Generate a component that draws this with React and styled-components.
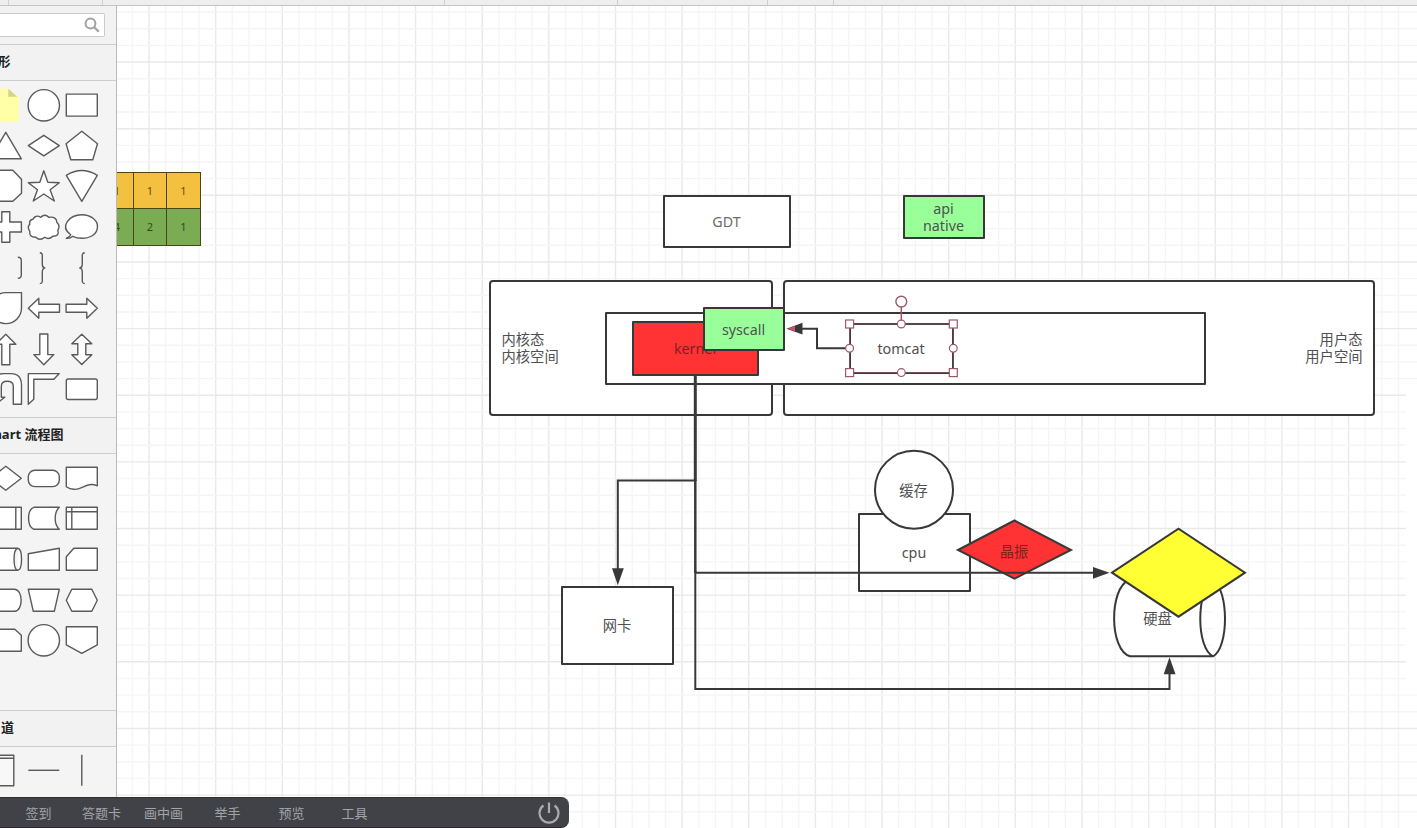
import React from "react";
import styled, { createGlobalStyle, css } from "styled-components";

const sans = `"Noto Sans", "Noto Sans CJK SC", sans-serif`;
const INK = "#383838";

const Global = createGlobalStyle`
  * { box-sizing: border-box; }
  body { margin: 0; overflow: hidden; background: #fff; font-family: ${sans}; }
`;

const Page = styled.div`
  position: relative;
  display: flex;
  flex-direction: column;
  width: 1417px;
  height: 828px;
  overflow: hidden;
`;

const Toolbar = styled.header`
  display: flex;
  flex: none;
  height: 6px;
  background: #eeeeee;
  border-bottom: 1px solid #c4c4c4;
`;
const ToolGroup = styled.div`
  width: ${(p) => p.$w}px;
  border-right: 1px solid #cfcfcf;
`;

const Main = styled.main`
  display: flex;
  flex: 1;
  min-height: 0;
`;

const Sidebar = styled.aside`
  position: relative;
  z-index: 2;
  flex: none;
  width: 117px;
  overflow: hidden;
  background: #f4f4f4;
  border-right: 1px solid #b9b9b9;
`;
const SearchRow = styled.div`
  height: 38px;
  padding: 7px 11px 0 0;
  background: #f2f2f2;
`;
const SearchBox = styled.div`
  display: flex;
  align-items: center;
  justify-content: flex-end;
  height: 24px;
  padding-right: 4px;
  background: #fff;
  border: 1px solid #cbcbcb;
  border-left: 0;
  border-radius: 0 2px 2px 0;
`;
const Heading = styled.h3`
  display: flex;
  align-items: center;
  justify-content: flex-end;
  height: 37px;
  margin: 0;
  padding: 0 ${(p) => p.$right}px 3px 0;
  background: #f2f2f2;
  border: solid #cdcdcd;
  border-width: 1px 0;
  color: #222;
  font: bold 13px/18px ${sans};
  white-space: nowrap;
`;
const Palette = styled.div`
  display: grid;
  grid-template-columns: repeat(3, 37.6px);
  grid-auto-rows: 40.65px;
  align-content: start;
  height: ${(p) => p.$h}px;
  margin-left: -12.6px;
  padding-top: ${(p) => p.$top}px;
`;
const Glyph = styled.svg`
  width: 37.6px;
  height: 40.65px;
  overflow: visible;
  fill: #fff;
  stroke: #5a5a5a;
  stroke-width: 1.4;
  stroke-linejoin: round;
`;

const Canvas = styled.section`
  position: relative;
  flex: 1;
  overflow: hidden;
  background: #fff;
`;
/* Board coordinates start at the top left corner of the window. */
const Board = styled.div`
  position: absolute;
  left: -117px;
  top: -6px;
  width: 1417px;
  height: 828px;
`;
const Layer = styled.svg`
  position: absolute;
  left: 0;
  top: 0;
  width: 1417px;
  height: 828px;
  fill: none;
  stroke: ${INK};
  stroke-width: 2;
`;
const Node = styled.div`
  position: absolute;
  left: ${(p) => p.$x}px;
  top: ${(p) => p.$y}px;
  width: ${(p) => p.$w}px;
  height: ${(p) => p.$h}px;
  display: flex;
  align-items: center;
  justify-content: ${(p) => p.$align || "center"};
  padding: ${(p) => p.$pad || "0 1px 0 0"};
  text-align: ${(p) => p.$text || "center"};
  white-space: pre;
  color: ${(p) => p.$color || "#505050"};
  font: 14.3px/17px ${sans};
  ${(p) =>
    !p.$bare &&
    css`
      background: ${p.$fill || "#fff"};
      border: 2px solid ${INK};
      border-radius: ${p.$r || 1}px;
    `}
`;

const Table = styled.div`
  position: absolute;
  left: 100px;
  top: 172px;
  display: grid;
  grid-template-columns: 33px 33px 33px;
  grid-auto-rows: 36px;
  border: 1px solid #4a4416;
`;
const Cell = styled.div`
  display: flex;
  align-items: center;
  justify-content: center;
  background: ${(p) => p.$bg};
  border: solid #4a4416;
  border-width: 0 1px 1px 0;
  &:nth-child(3n) { border-right: 0; }
  &:nth-child(n + 4) { border-bottom: 0; }
  color: ${(p) => p.$color};
  font: 11px/14px ${sans};
`;

const Dock = styled.nav`
  position: absolute;
  z-index: 3;
  left: 0;
  bottom: 0;
  display: flex;
  align-items: center;
  width: 568.5px;
  height: 31.5px;
  padding: 2px 9px 0 25.4px;
  background: #404248;
  border-top: 1px solid #2f3034;
  border-bottom: 1px solid #2b262b;
  border-radius: 0 8px 8px 0;
`;
const DockItem = styled.span`
  width: ${(p) => p.$w}px;
  color: #a3a4a6;
  font: 13px/18px "Noto Sans CJK SC", sans-serif;
`;
const PowerIcon = styled.svg`
  width: 22px;
  height: 22px;
  margin-left: auto;
  fill: none;
  stroke: #a9abad;
  stroke-width: 2.2;
`;

const basicShapes = [
  <g stroke="none"><path fill="#ffffa8" d="M-16-16.5H2.5L13-8V16.5H-16z" /><path fill="#d2d28e" d="M2.5-16.5 11.5-8.5h-9z" /></g>,
  <circle r="15.7" />,
  <path d="M-15.5-11.2h31v22h-31z" />,
  <path d="M0-14 15.6 12.5h-31.2z" />,
  <path d="M-15.5-.7 0-11 15.5-.7 0 9.6z" />,
  <path d="M0-15 15.7-2.5 11 13.5H-11L-15.7-2.5z" />,
  <path d="M-7-16H7L15.7-7V7L7 15H-7L-15.7 7V-7z" />,
  <path d="M0-15.5 4-4 15.5-3.5 6.3 3.5 10.5 14.7 0 7.7-10.5 14.7-6.3 3.5-15.5-3.5-4-4z" />,
  <path d="M-15.5-11Q0-20.5 15.5-11L0 15z" />,
  <path d="M-4-15.5H4V-5.3H15.6V4.7H4V15H-4V4.7H-15.6V-5.3H-4z" />,
  <path d="M-11-8Q-8-13-3-10Q1-14 5-10Q13-11 13-5Q17-1 14 3Q16 9 9 9Q5 13 1 10Q-4 14-8 10Q-15 10-14 4Q-17-1-14-3Q-15-7-11-8z" />,
  <path d="M-11 7.5C-23-1-12-12.5 0-12.5C9-12.5 15.7-7 15.7-1C15.7 7 9 11 0 11C-4 11-7 10-9 9Q-12 11.5-15.5 11Q-12 9.5-11 7.5z" />,
  <path fill="none" d="M12-11Q15.5-11 15.5-8V7Q15.5 10 12 10" />,
  <path fill="none" d="M-4-15.5Q-1-15.5-1.5-11V-4Q-1.5-.5 1-.3Q-1.5 0-1.5 4V11Q-1 15.3-4 15.3" />,
  <path fill="none" d="M3-15.5Q0-15.5.5-11V-4Q.5-.5-2-.3Q.5 0 .5 4V11Q0 15.3 3 15.3" />,
  <path d="M0-15.7H15.7V0A15.7 15.5 0 1 1 0-15.7z" />,
  <path d="M-15.5 0-5-10V-4H15.7V4H-5V10z" />,
  <path d="M15.5 0 5-10V-4H-15.7V4H5V10z" />,
  <path d="M0-15 10-5H4V15.5H-4V-5H-10z" />,
  <path d="M0 15.5 10 5.3H4V-15.3H-4V5.3H-10z" />,
  <path d="M0-15 10-5.5H4V5.5H10L0 15.3-10 5.5H-4V-5.5H-10z" />,
  <path d="M15.7 15V-4Q15.7-15.7 5-15.7H-2Q-13-15.7-13-4V8H-16L-9 14-1 8H-4.5V-3Q-4.5-8 1.5-8T7.5-3V15z" />,
  <path d="M-15.5-15.7H15.5L10-10H-10V10L-15.5 15z" />,
  <rect x="-15.5" y="-10.3" width="31" height="20.5" rx="2" />,
];

const flowShapes = [
  <path d="M0-12 15.5 0 0 12-15.5 0z" />,
  <rect x="-15.5" y="-8" width="31" height="16.3" rx="6.5" />,
  <path d="M-15.5-11h31V7.5C5 3 0 12-8 11Q-12 11-15.5 8.5z" />,
  <path d="M-15.5-11h31v22h-31zM10-11V11M-10-11V11" />,
  <path d="M15.5-11H-10C-17-8-17 8-10 11H15.5C10 6 10-6 15.5-11z" />,
  <path d="M-15.5-11h31v22h-31zM-10-11V11M-15.5-6.5h31" />,
  <path d="M-12-11H12C17-10 17 10 12 11H-12C-17 10-17-10-12-11zM12-11C7-10 7 10 12 11" />,
  <path d="M-15.5-5.5 15.5-11V11H-15.5z" />,
  <path d="M-8-11H15.5V11H-15.5V-2.5z" />,
  <path d="M-10-11H9C17.5-10 17.5 10 9 11H-10z" />,
  <path d="M-15.5-11H15.5L10.5 11H-10.5z" />,
  <path d="M-10-11H10L15.5 0 10 11H-10L-15.5 0z" />,
  <path d="M-15.5-11H9L15.5-5V11H-15.5z" />,
  <circle r="15.7" />,
  <path d="M-15.5-13.5h31V4.5L0 13-15.5 4.5z" />,
];

const laneShapes = [
  <path fill="#f8f8f8" d="M-10-15H8V15.5H-10zM-10-12H8" />,
  <path d="M-15.5 0h31" />,
  <path d="M0-15.5v31" />,
];

function Shapes({ items, h, top }) {
  return (
    <Palette $h={h} $top={top}>
      {items.map((shape, i) => (
        <Glyph key={i} viewBox="-18.8 -20.3 37.6 40.65">{shape}</Glyph>
      ))}
    </Palette>
  );
}

const cols = Array.from({ length: 78 }, (_, i) => 115.7 + i * 16.66);
const rows = Array.from({ length: 50 }, (_, i) => -4.6 + i * 16.66);

function Grid() {
  return (
    <Layer>
      {cols.map((x, i) => (
        <path key={"c" + i} strokeWidth="1.4" stroke={i % 4 === 2 ? "#e9e9e9" : "#f5f5f5"} d={`M${x} 0V828`} />
      ))}
      {rows.map((y, i) => (
        <path key={"r" + i} strokeWidth="1.4" stroke={i % 4 === 0 ? "#e9e9e9" : "#f5f5f5"} d={`M117 ${y}H1417`} />
      ))}
      <path fill="#fff" stroke="none" d="M1406 382h11v307h-11z" />
    </Layer>
  );
}

const tableRows = [
  { bg: "#f3c03f", color: "#6a4e12", cells: ["1", "1", "1"] },
  { bg: "#7bab52", color: "#2f4a1c", cells: ["4", "2", "1"] },
];

const dockItems = [
  ["签到", 56.5],
  ["答题卡", 62],
  ["画中画", 70.5],
  ["举手", 64],
  ["预览", 63],
  ["工具", 30],
];

export default function App() {
  return (
    <Page>
      <Global />
      <Toolbar>
        {[9, 94, 342, 173, 150, 66].map((w, i) => <ToolGroup key={i} $w={w} />)}
      </Toolbar>
      <Main>
        <Sidebar>
          <SearchRow>
            <SearchBox>
              <svg width="16" height="16" viewBox="0 0 16 16" fill="none" stroke="#a2a2a2">
                <circle cx="6.5" cy="6.5" r="4.9" strokeWidth="2" />
                <path d="M10.2 10.2 14.8 14.6" strokeWidth="2.2" />
              </svg>
            </SearchBox>
          </SearchRow>
          <Heading $right={105.5}>形</Heading>
          <Shapes items={basicShapes} h={336} top={4} />
          <Heading $right={52.5}>hart 流程图</Heading>
          <Shapes items={flowShapes} h={255.5} top={3.7} />
          <Heading $right={102}>道</Heading>
          <Shapes items={laneShapes} h={52} top={3.5} />
        </Sidebar>
        <Canvas>
          <Board>
            <Grid />
            <Table>
              {tableRows.map((r) =>
                r.cells.map((c, i) => <Cell key={i + r.bg} $bg={r.bg} $color={r.color}>{c}</Cell>)
              )}
            </Table>

            <Node $x={663} $y={195} $w={128} $h={53} $color="#6c6c6c">GDT</Node>
            <Node $x={903} $y={195} $w={82} $h={44} $fill="#99ff99">{"api\nnative"}</Node>
            <Node $x={489} $y={280} $w={284} $h={136} $r={4} $align="flex-start" $text="left" $pad="0 0 0 10.5px">{"内核态\n内核空间"}</Node>
            <Node $x={783} $y={280} $w={592} $h={136} $r={4} $align="flex-end" $text="right" $pad="0 10.5px 0 0">{"用户态\n用户空间"}</Node>
            <Node $x={605} $y={312} $w={601} $h={73} />
            <Node $x={632} $y={321} $w={127} $h={55} $fill="#ff3333" $color="#80201f">kernel</Node>
            <Node $x={849} $y={323} $w={105} $h={51}>tomcat</Node>
            <Node $x={561} $y={586} $w={113} $h={79}>网卡</Node>
            <Node $x={858} $y={513} $w={113} $h={79}>cpu</Node>

            <Layer>
              <circle cx="914" cy="489.7" r="39" fill="#fff" />
              <path fill="#ff3333" d="M958 550 1014.5 520.5 1071 550 1014.5 578.7z" />
              <path fill="#fff" d="M1129 580H1213C1229 590 1229 648 1213 656.3H1130C1109 650 1109 588 1129 580zM1213 580C1196 590 1196 648 1213 656.3" />
            </Layer>
            <Node $bare $x={864} $y={470} $w={100} $h={40}>缓存</Node>
            <Node $bare $x={964.5} $y={531} $w={100} $h={40} $color="#80201f">晶振</Node>
            <Node $bare $x={1108} $y={598} $w={100} $h={40}>硬盘</Node>

            <Layer>
              <path fill="#ffff33" d="M1112 572.7 1178.5 528.7 1245 572.7 1178.5 616.7z" />
              <path strokeWidth="3" d="M695.3 376V481" />
              <path strokeWidth="2.5" d="M695.3 480V573" />
              <path d="M695.3 480.5H617.8V570M695.3 572.8H1096M695.3 570V689H1169.5V672" />
              <path d="M849 348.3H817V328.7H800" />
              <g fill={INK} stroke="none">
                <path d="M612 568.3h11.8L617.8 585.3z" />
                <path d="M1093 567v11.8L1109.5 572.8z" />
                <path d="M1163.7 674.3h11.8L1169.5 657.3z" />
                <path d="M802.5 322.8v11.8L786.5 328.7z" />
                <path fill="#c9566a" d="M795 325.8v5.8L788 328.7z" />
              </g>
              <path stroke="#8e5a64" strokeWidth="0.8" d="M849.6 324H953.3V372.6H849.6z" />
              <g stroke="#9c5964" strokeWidth="1.2" fill="#fff">
                <path d="M901.3 307v13" strokeWidth="1.5" />
                <circle cx="901.3" cy="301.6" r="5.4" strokeWidth="1.4" />
                {[[849.6, 324], [953.3, 324], [849.6, 372.6], [953.3, 372.6]].map(([x, y]) => (
                  <rect key={x + "-" + y} x={x - 4} y={y - 4} width="8" height="8" />
                ))}
                {[[901.3, 324], [901.3, 372.6], [849.6, 348.3], [953.3, 348.3]].map(([x, y]) => (
                  <circle key={x + "-" + y} cx={x} cy={y} r="3.9" />
                ))}
              </g>
            </Layer>
            <Node $x={703} $y={307} $w={82} $h={44} $fill="#99ff99">syscall</Node>
          </Board>
        </Canvas>
      </Main>
      <Dock>
        {dockItems.map(([label, w]) => <DockItem key={label} $w={w}>{label}</DockItem>)}
        <PowerIcon viewBox="-11 -11 22 22">
          <path d="M-5.6-7.5A9.5 9.5 0 1 0 5.6-7.5M0-10.5V0" />
        </PowerIcon>
      </Dock>
    </Page>
  );
}
